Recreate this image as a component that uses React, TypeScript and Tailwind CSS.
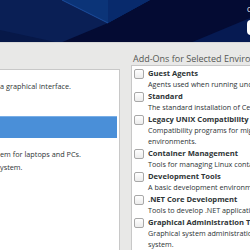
const addons = [
  { title: 'Guest Agents', desc: ['Agents used when running under a hypervisor.'] },
  { title: 'Standard', desc: ['The standard installation of CentOS.'] },
  { title: 'Legacy UNIX Compatibility', desc: ['Compatibility programs for migration from or working with legacy UNIX', 'environments.'] },
  { title: 'Container Management', desc: ['Tools for managing Linux containers'] },
  { title: 'Development Tools', desc: ['A basic development environment.'] },
  { title: '.NET Core Development', desc: ['Tools to develop .NET applications'] },
  { title: 'Graphical Administration Tools', desc: ['Graphical system administration tools for managing many aspects of a', 'system.'] },
];

const Header = () => (
  <div className="relative h-[43px] shrink-0 overflow-hidden bg-[#040b33] border-b border-[#d8d8d8]">
    <svg className="absolute inset-0" width="250" height="43" viewBox="0 0 250 43">
      <polygon points="0,0 108,0 108,23 60,43 0,43" fill="#0a1f55" />
      <polygon points="62,0 150,0 108,23" fill="#0b3478" />
      <polygon points="108,0 150,0 108,23" fill="#082a6c" />
      <polygon points="0,30 60,43 0,43" fill="#071848" />
      <line x1="62" y1="0" x2="108" y2="23" stroke="#1c4c9c" strokeWidth="1" />
      <polygon points="190,43 250,18 250,43" fill="#061a52" />
    </svg>
    <div className="absolute left-[247px] top-[6px] text-[7px] leading-[8px] text-white whitespace-nowrap">CENTOS 7 INSTALLATION</div>
    <div className="absolute left-[247px] top-[20px] w-[30px] h-[15px] bg-white rounded-sm" />
  </div>
);

const Checkbox = () => (
  <div className="w-[10px] h-[10px] mt-[1px] shrink-0 rounded-[2px] border border-[#a8a8a8] bg-gradient-to-b from-white to-[#ececec]" />
);

export default function App() {
  return (
    <div className="w-[250px] h-[250px] overflow-hidden flex flex-col bg-[#e8e8e7] font-['Open_Sans',sans-serif]">
      <Header />
      <div className="flex flex-1 min-h-0">
        <div className="w-[120px] shrink-0 pt-[26px] flex flex-col">
          <div className="flex-1 bg-white border-t border-r border-[#c8c8c8] pt-[11px] text-[7.3px] leading-[10px] text-[#2e3436] whitespace-nowrap">
            <div className="h-[35px]">a graphical interface.</div>
            <div className="h-[22px] mr-[2px] bg-[#4a8fd8] border-t border-[#79aee6]" />
            <div className="h-[24px] pt-[11px]">em for laptops and PCs.</div>
            <div>ystem.</div>
          </div>
        </div>
        <div className="flex-1 min-w-0 ml-[11px] flex flex-col">
          <div className="h-[26px] pt-[10px] pl-[2px] text-[9px] leading-[12px] text-[#555753] whitespace-nowrap">Add-Ons for Selected Environment</div>
          <div className="flex-1 bg-white border-t border-l border-[#c8c8c8] pt-[2px] pl-[2px] flex flex-col gap-[1px] whitespace-nowrap text-[#2e3436]">
            {addons.map((a) => (
              <div key={a.title} className="flex gap-[4px]">
                <Checkbox />
                <div className="flex flex-col">
                  <div className="text-[7.6px] leading-[11px] font-bold">{a.title}</div>
                  {a.desc.map((d) => (
                    <div key={d} className="text-[7.2px] leading-[11px]">{d}</div>
                  ))}
                </div>
              </div>
            ))}
          </div>
        </div>
      </div>
    </div>
  );
}
